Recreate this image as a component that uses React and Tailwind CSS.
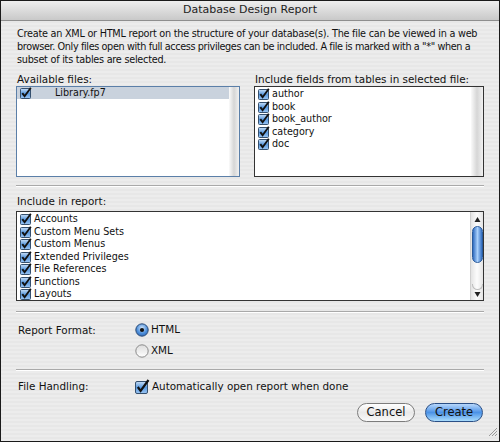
import React from 'react';

const Check = () => (
  <svg width="12" height="12" viewBox="0 0 12 12" className="shrink-0">
    <defs>
      <linearGradient id="cbg" x1="0" y1="0" x2="0" y2="1">
        <stop offset="0" stopColor="#c8def5" />
        <stop offset="0.5" stopColor="#5a9ae0" />
        <stop offset="1" stopColor="#9cc6f3" />
      </linearGradient>
    </defs>
    <rect x="0.5" y="1.5" width="10" height="10" rx="1" fill="url(#cbg)" stroke="#35506e" />
    <path d="M2.3 6.2 L4.6 9.2 L10.8 0.8" fill="none" stroke="#111" strokeWidth="1.9" />
  </svg>
);

const Radio = ({ on }) => (
  <svg width="14" height="14" viewBox="0 0 14 14" className="shrink-0">
    <defs>
      <radialGradient id="rbg" cx="0.5" cy="0.35" r="0.7">
        <stop offset="0" stopColor="#d5e7fa" />
        <stop offset="0.6" stopColor="#4d8fdb" />
        <stop offset="1" stopColor="#2a62b0" />
      </radialGradient>
      <linearGradient id="rof" x1="0" y1="0" x2="0" y2="1">
        <stop offset="0" stopColor="#dcdcdc" />
        <stop offset="1" stopColor="#ffffff" />
      </linearGradient>
    </defs>
    <circle cx="7" cy="7" r="6.2" fill={on ? 'url(#rbg)' : 'url(#rof)'} stroke={on ? '#2e4d77' : '#8a8a8a'} />
    {on && <circle cx="7" cy="7" r="2.1" fill="#111" />}
  </svg>
);

const Row = ({ label }) => (
  <div className="flex items-center h-[12.5px] gap-[2px] pl-[3px]">
    <Check />
    <span>{label}</span>
  </div>
);

const Separator = ({ className = '' }) => (
  <div className={`h-[2px] border-t border-[#a9a9a9] border-b border-b-white ${className}`} />
);

export default function App() {
  const fields = ['author', 'book', 'book_author', 'category', 'doc'];
  const report = [
    'Accounts',
    'Custom Menu Sets',
    'Custom Menus',
    'Extended Privileges',
    'File References',
    'Functions',
    'Layouts',
  ];

  return (
    <div
      className="w-[500px] h-[442px] border border-[#1a1a1a] flex flex-col overflow-hidden text-[#111] bg-[repeating-linear-gradient(0deg,#ececec_0px,#ececec_2px,#e7e7e7_2px,#e7e7e7_4px)]"
      style={{ fontFamily: '"DejaVu Sans", "Liberation Sans", sans-serif' }}
    >
      {/* Title bar */}
      <div className="h-[20px] shrink-0 flex items-center justify-center text-[11px] text-[#1d1d1d] bg-gradient-to-b from-[#eeeeee] to-[#c9c9c9] border-b border-[#8e8e8e]">
        Database Design Report
      </div>

      <div className="flex flex-col px-[15px]">
        {/* Description */}
        <p className="mt-[6px] text-[9.7px] leading-[13px] pl-px whitespace-nowrap">
          <span className="block tracking-[-0.25px]">
            Create an XML or HTML report on the structure of your database(s). The file can be viewed in a web
          </span>
          <span className="block tracking-[-0.38px]">
            browser. Only files open with full access privileges can be included. A file is marked with a "*" when a
          </span>
          <span className="block tracking-[-0.25px]">subset of its tables are selected.</span>
        </p>

        {/* File / tables lists */}
        <div className="flex gap-[14px] mt-[7px]">
          <div className="w-[224px] flex flex-col">
            <div className="text-[10.4px] leading-[13px] pl-px">Available files:</div>
            <div className="h-[91px] border border-[#5b7fa8] bg-white flex text-[9.6px]">
              <div className="flex-1">
                <div className="flex items-center h-[12px] gap-[23px] pl-[3px] bg-[#c9d2dd]">
                  <Check />
                  <span>Library.fp7</span>
                </div>
              </div>
              <div className="w-[10px] bg-gradient-to-r from-[#fafafa] via-[#d6d6d6] to-[#f1f1f1]" />
            </div>
          </div>

          <div className="w-[230px] flex flex-col">
            <div className="text-[10.4px] leading-[13px] pl-px">Include fields from tables in selected file:</div>
            <div className="h-[91px] border border-[#333] bg-white flex text-[9.6px]">
              <div className="flex-1 pt-px">
                {fields.map((f) => (
                  <Row key={f} label={f} />
                ))}
              </div>
              <div className="w-[12px] bg-gradient-to-r from-[#fafafa] via-[#d6d6d6] to-[#f1f1f1]" />
            </div>
          </div>
        </div>

        <Separator className="mt-[8px]" />

        {/* Include in report */}
        <div className="mt-[8px] mb-[3px] text-[10.4px] leading-[13px] pl-px">Include in report:</div>
        <div className="h-[90px] border border-[#333] bg-white flex text-[9.6px]">
          <div className="flex-1 pt-px">
            {report.map((r) => (
              <Row key={r} label={r} />
            ))}
          </div>
          <div className="w-[13px] flex flex-col items-center bg-gradient-to-r from-[#e4e4e4] via-[#fcfcfc] to-[#e4e4e4] border-l border-[#cfcfcf]">
            <svg width="7" height="9" viewBox="0 0 7 9" className="mt-[3px] shrink-0">
              <path d="M3.5 2 L6.5 7 L0.5 7 Z" fill="#222" />
            </svg>
            <div className="mt-[2px] w-[11px] h-[37px] rounded-full border border-[#2a5b9c] bg-gradient-to-r from-[#2f6cc0] via-[#a9d0fb] to-[#2f6cc0]" />
            <div className="flex-1" />
            <div className="w-[11px] h-[6px] rounded-b-full border border-t-0 border-[#bdbdbd]" />
            <svg width="7" height="9" viewBox="0 0 7 9" className="mb-[1px] shrink-0">
              <path d="M0.5 2 L6.5 2 L3.5 7 Z" fill="#222" />
            </svg>
          </div>
        </div>

        <Separator className="mt-[10px]" />

        {/* Report format */}
        <div className="flex mt-[9px] text-[10.4px]">
          <div className="w-[119px] pl-[2px] leading-[16px]">Report Format:</div>
          <div className="flex flex-col gap-[5px]">
            <div className="flex items-center gap-[2px] h-[16px]">
              <Radio on />
              <span>HTML</span>
            </div>
            <div className="flex items-center gap-[2px] h-[16px]">
              <Radio />
              <span>XML</span>
            </div>
          </div>
        </div>

        <Separator className="mt-[10px]" />

        {/* File handling */}
        <div className="flex mt-[7px] text-[10.4px] leading-[16px]">
          <div className="w-[119px] pl-[2px]">File Handling:</div>
          <div className="flex items-center gap-[2px]">
            <svg width="15" height="15" viewBox="0 0 15 15" className="shrink-0">
              <defs>
                <linearGradient id="cbg2" x1="0" y1="0" x2="0" y2="1">
                  <stop offset="0" stopColor="#c8def5" />
                  <stop offset="0.5" stopColor="#5a9ae0" />
                  <stop offset="1" stopColor="#9cc6f3" />
                </linearGradient>
              </defs>
              <rect x="0.5" y="2.5" width="12" height="12" rx="1.5" fill="url(#cbg2)" stroke="#35506e" />
              <path d="M2.8 8 L5.6 11.8 L13.5 1" fill="none" stroke="#111" strokeWidth="2.2" />
            </svg>
            <span>Automatically open report when done</span>
          </div>
        </div>

        {/* Buttons */}
        <div className="flex justify-end gap-[10px] mt-[9px] pr-[1px] text-[11.5px]">
          <button className="w-[58px] h-[19px] rounded-full border border-[#7c7c7c] bg-gradient-to-b from-[#ffffff] via-[#e9e9e9] to-[#f9f9f9] leading-none">
            Cancel
          </button>
          <button className="w-[58px] h-[19px] rounded-full border border-[#2a4f86] bg-gradient-to-b from-[#b7d7fb] via-[#4b92e6] to-[#a9dcfc] leading-none">
            Create
          </button>
        </div>

        {/* Resize grip */}
        <div className="flex justify-end mt-[4px] -mr-[14px]">
          <svg width="11" height="11" viewBox="0 0 11 11">
            <path d="M10 2 L2 10 M10 5 L5 10 M10 8 L8 10" stroke="#9a9a9a" strokeWidth="1" />
          </svg>
        </div>
      </div>
    </div>
  );
}
